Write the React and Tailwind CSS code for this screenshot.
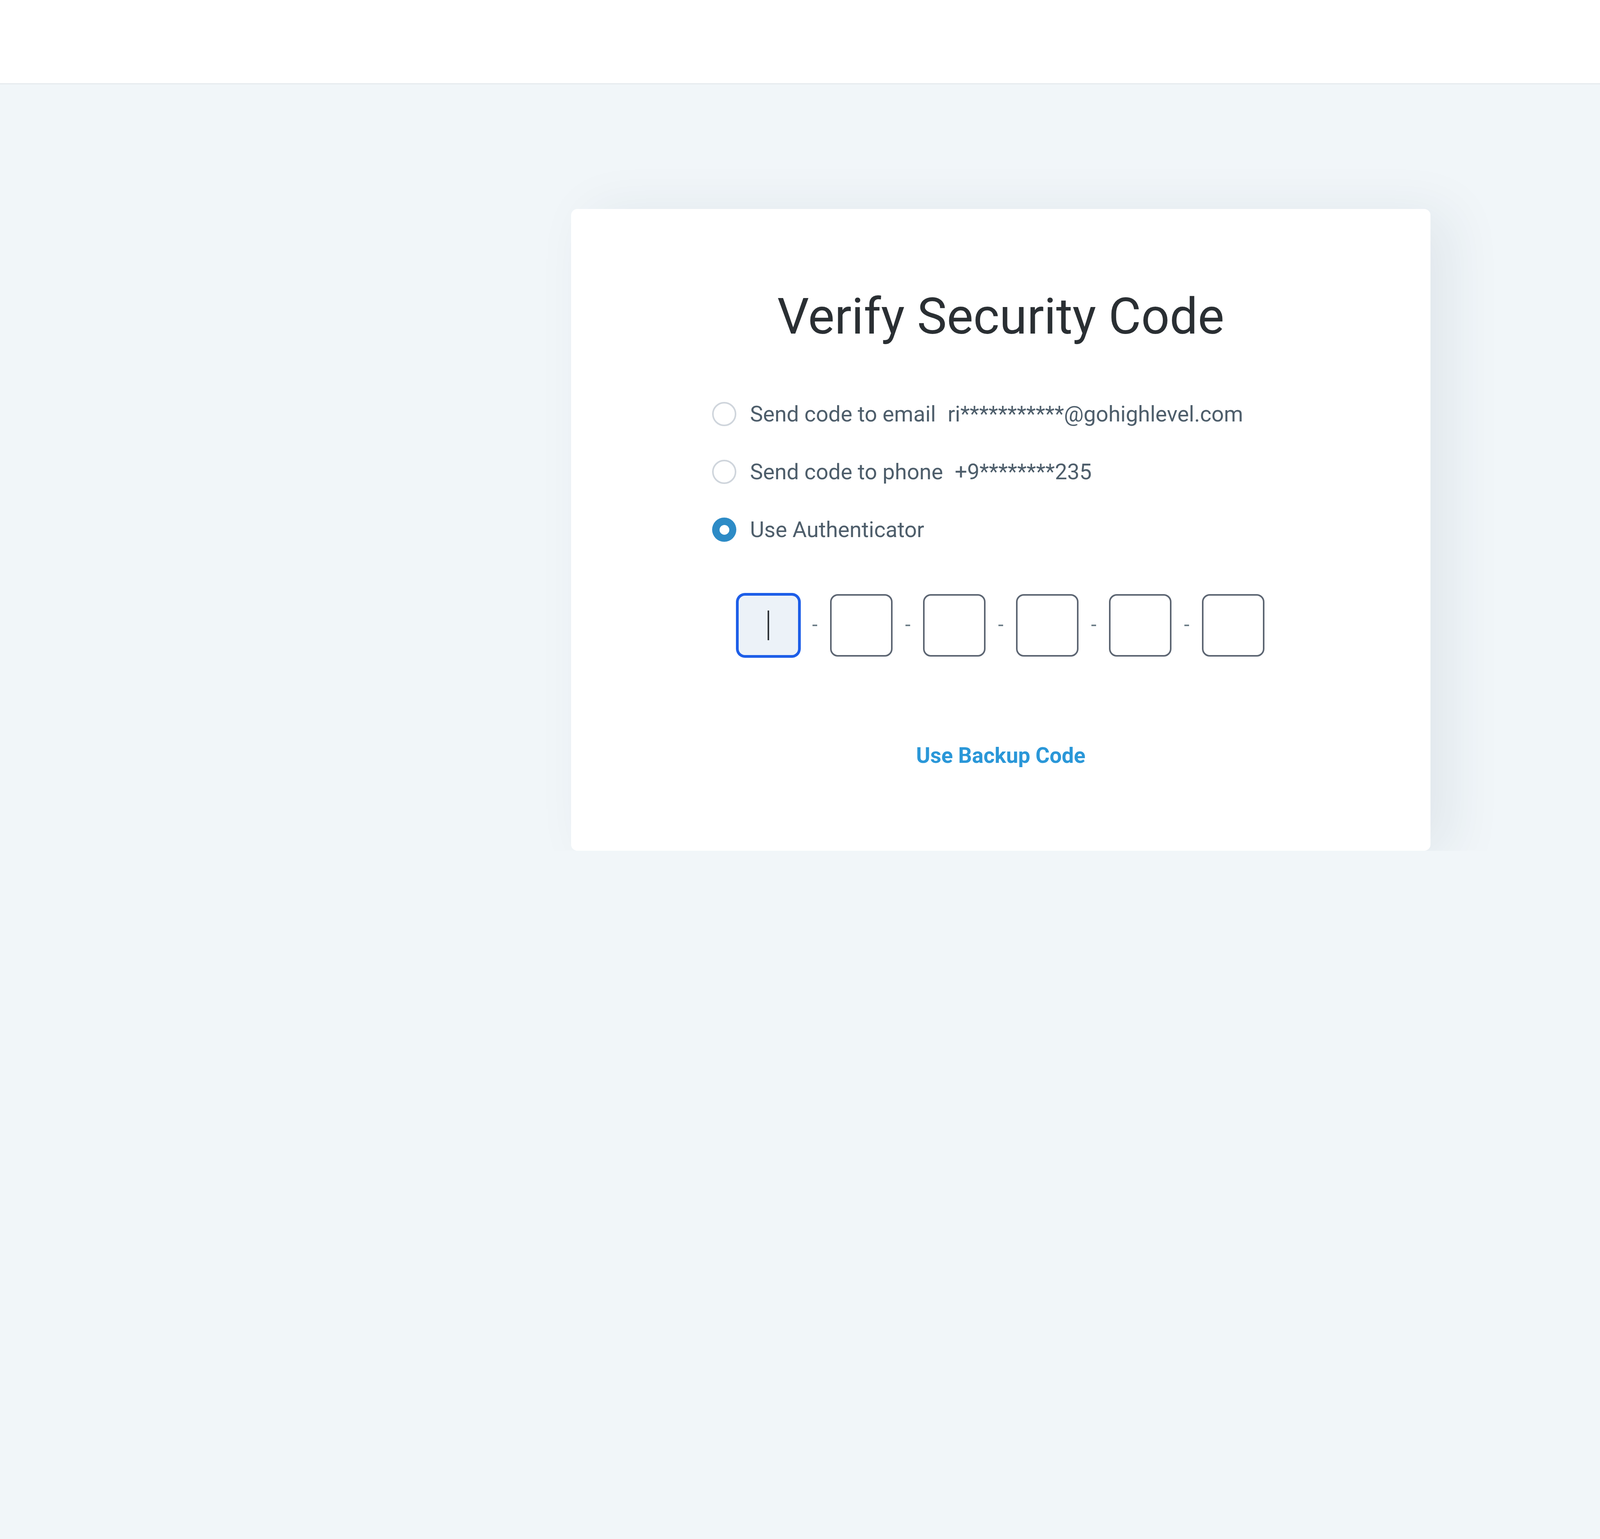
export default function App() {
  const font = { fontFamily: "Roboto, 'Liberation Sans', sans-serif" };
  const Box = ({ active }) =>
    active ? (
      <div className="w-[160px] h-[160px] rounded-[20px] border-[4px] border-[#1d5ee8] ring-[3px] ring-[#1d5ee8] bg-[#ecf2f8] flex items-center justify-center">
        <div className="w-[4px] h-[76px] bg-[#2f3438]" />
      </div>
    ) : (
      <div className="w-[160px] h-[160px] rounded-[20px] border-[4px] border-[#5c6572] bg-white" />
    );
  const Dash = () => (
    <div className="w-[78px] h-[160px] flex items-center justify-center">
      <div className="w-[12px] h-[4px] bg-[#6e7f89]" />
    </div>
  );
  const Radio = ({ checked }) =>
    checked ? (
      <div className="w-[62px] h-[62px] rounded-full bg-[#2d8bc6] flex items-center justify-center shrink-0">
        <div className="w-[25px] h-[25px] rounded-full bg-white" />
      </div>
    ) : (
      <div className="w-[62px] h-[62px] rounded-full border-[4px] border-[#cfd5dc] bg-white shrink-0" />
    );
  return (
    <div className="w-full min-h-screen bg-[#f1f6f9]" style={font}>
      <header className="h-[216px] bg-white border-b-[3px] border-[#e6eaee]" />
      <div className="ml-[1062px] w-[2900px] overflow-hidden pt-[319px] pl-[400px]">
        <div className="w-[2200px] bg-white rounded-[16px] shadow-[50px_10px_140px_rgba(20,50,80,0.08)] flex flex-col pt-[200px] pb-[204px]">
          <h1 className="text-center text-[128px] leading-[150px] font-normal text-[#2a2f33]">
            Verify Security Code
          </h1>
          <div className="mt-[135px] ml-[361px] flex flex-col gap-[68px] text-[56px] text-[#4e5e6b]">
            <label className="flex items-center h-[80px] leading-[80px]">
              <Radio />
              <span className="ml-[35px]">Send code to email</span>
              <span className="ml-[30px]">ri***********@gohighlevel.com</span>
            </label>
            <label className="flex items-center h-[80px] leading-[80px]">
              <Radio />
              <span className="ml-[35px]">Send code to phone</span>
              <span className="ml-[30px]">+9********235</span>
            </label>
            <label className="flex items-center h-[80px] leading-[80px]">
              <Radio checked />
              <span className="ml-[35px]">Use Authenticator</span>
            </label>
          </div>
          <div className="mt-[125px] self-center flex items-center">
            <Box active />
            <Dash />
            <Box />
            <Dash />
            <Box />
            <Dash />
            <Box />
            <Dash />
            <Box />
            <Dash />
            <Box />
          </div>
          <a className="mt-[213px] self-center text-[55px] leading-[80px] font-bold text-[#2a97d8] cursor-pointer">
            Use Backup Code
          </a>
        </div>
      </div>
    </div>
  );
}
